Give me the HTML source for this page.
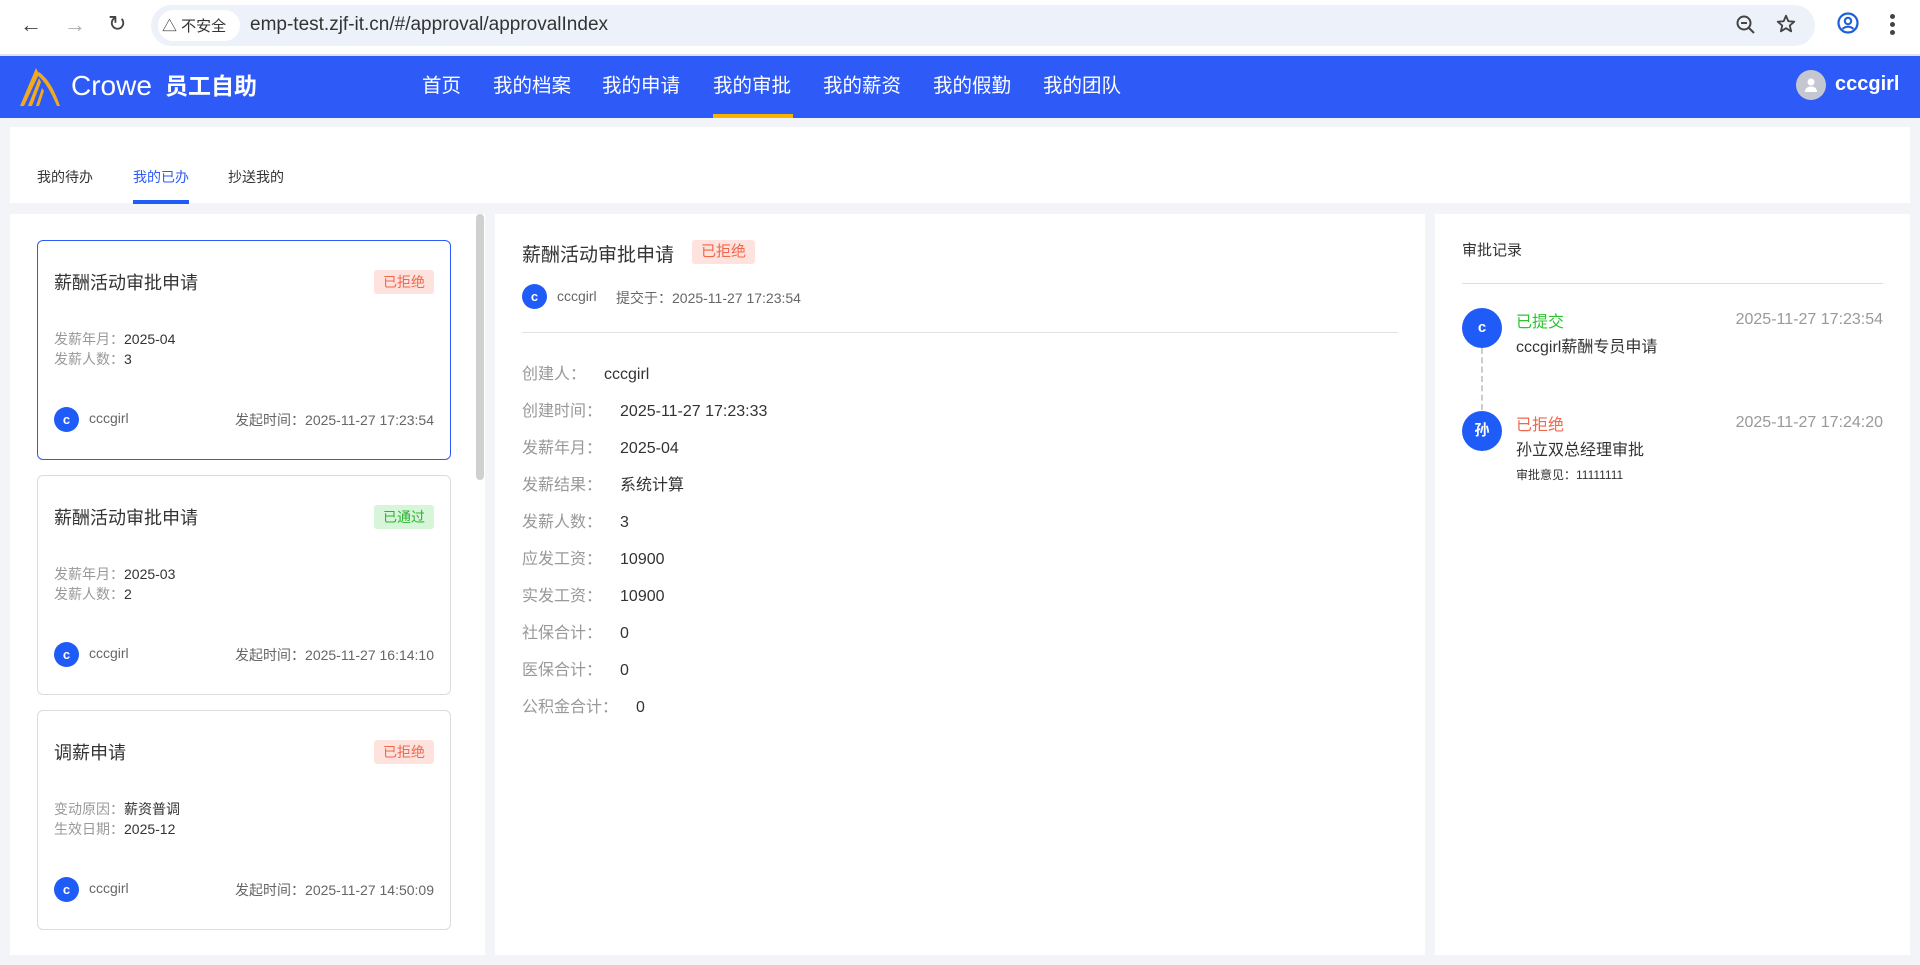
<!DOCTYPE html>
<html><head><meta charset="utf-8"><style>
*{margin:0;padding:0;box-sizing:border-box}
body{width:1920px;height:965px;overflow:hidden;background:#f3f4f8;font-family:"Liberation Sans","Noto Sans CJK SC",sans-serif;color:#333;position:relative}
.abs{position:absolute}
.chrome{left:0;top:0;width:1920px;height:54px;background:#fff}
.pill{left:151px;top:5px;width:1664px;height:41px;border-radius:21px;background:#edf2fa}
.nav{left:0;top:54px;width:1920px;height:64px;background:#2e5bf7;border-top:2px solid #dde3f0}
.navi{top:13px;color:#fff;font-size:19.5px;white-space:nowrap}
.panel{background:#fff}
.card{position:absolute;left:37px;width:414px;height:220px;border:1px solid #dcdcdc;border-radius:6px;background:#fff}
.card.sel{border-color:#2e5bf7}
.ct{position:absolute;left:16px;top:28px;font-size:18px;color:#333}
.tag{position:absolute;font-size:14px;padding:0 9px;height:24px;line-height:24px;border-radius:3px}
.rej{background:#fde2de;color:#f2674a}
.ok{background:#d7f5d9;color:#2bb42f}
.cd{position:absolute;left:16px;font-size:14px;color:#999}
.cd b{font-weight:normal;color:#333}
.av{position:absolute;border-radius:50%;background:#1f5cf7;color:#fff;text-align:center;font-weight:bold}
.foot{position:absolute;left:16px;top:169px;width:380px;font-size:14px;color:#666}
.row{position:absolute;left:522px;font-size:16px;color:#999;white-space:nowrap}
.row b{font-weight:normal;color:#333;margin-left:18px}
</style></head><body>
<div class="abs chrome"></div>
<div class="abs" style="left:20px;top:12px;font-size:22px;color:#444">&#8592;</div>
<div class="abs" style="left:64px;top:12px;font-size:22px;color:#aaa">&#8594;</div>
<div class="abs" style="left:108px;top:11px;font-size:22px;color:#444">&#8635;</div>
<div class="abs pill"></div>
<div class="abs" style="left:158px;top:10px;width:82px;height:31px;border-radius:16px;background:#fff"></div>
<div class="abs" style="left:162px;top:15px;font-size:15px;color:#333">&#9651; 不安全</div>
<div class="abs" style="left:250px;top:14px;font-size:19px;color:#333">emp-test.zjf-it.cn/#/approval/approvalIndex</div>
<svg class="abs" style="left:1735px;top:14px" width="22" height="22" viewBox="0 0 22 22"><circle cx="9" cy="9" r="6.5" fill="none" stroke="#444" stroke-width="2"/><path d="M6 9h6M14 14l5 5" stroke="#444" stroke-width="2"/></svg>
<svg class="abs" style="left:1775px;top:13px" width="22" height="22" viewBox="0 0 24 24"><path d="M12 3l2.6 6 6.4.5-4.9 4.2 1.5 6.3L12 16.6 6.4 20l1.5-6.3L3 9.5l6.4-.5z" fill="none" stroke="#444" stroke-width="2" stroke-linejoin="round"/></svg>
<svg class="abs" style="left:1836px;top:11px" width="24" height="24" viewBox="0 0 24 24"><circle cx="12" cy="12" r="9.5" fill="none" stroke="#1a5fd6" stroke-width="2.2"/><circle cx="12" cy="10" r="3.2" fill="none" stroke="#1a5fd6" stroke-width="2"/><path d="M6.5 18c3-3 8-3 11 0" fill="none" stroke="#1a5fd6" stroke-width="2"/></svg>
<div class="abs" style="left:1890px;top:14px;width:5px"><div style="width:5px;height:5px;border-radius:50%;background:#444;margin-bottom:3px"></div><div style="width:5px;height:5px;border-radius:50%;background:#444;margin-bottom:3px"></div><div style="width:5px;height:5px;border-radius:50%;background:#444"></div></div>

<div class="abs nav">
<svg class="abs" style="left:18px;top:10px" width="44" height="42" viewBox="0 0 44 42"><path d="M2 40L18 2l3 6L6 40z" fill="#f2a91b"/><path d="M10 40L21 12l2 4-9 24z" fill="#f2a91b"/><path d="M18 40l6-18 2 3-5 15z" fill="#f2a91b"/><path d="M21 6c8 6 15 16 21 34h-3C33 26 27 15 19 9z" fill="#f2a91b"/></svg>
<div class="abs" style="left:71px;top:14px;color:#fff;font-size:28px">Crowe</div>
<div class="abs" style="left:165px;top:11px;color:#fff;font-size:23px;font-weight:bold">员工自助</div>
<div class="abs navi" style="left:422px">首页</div>
<div class="abs navi" style="left:493px">我的档案</div>
<div class="abs navi" style="left:602px">我的申请</div>
<div class="abs navi" style="left:713px">我的审批</div>
<div class="abs navi" style="left:823px">我的薪资</div>
<div class="abs navi" style="left:933px">我的假勤</div>
<div class="abs navi" style="left:1043px">我的团队</div>
<div class="abs" style="left:713px;top:58px;width:80px;height:4px;background:#f7b500"></div>
<div class="abs" style="left:1796px;top:14px;width:30px;height:30px;border-radius:50%;background:#c4c7cf"></div>
<svg class="abs" style="left:1802px;top:20px" width="18" height="18" viewBox="0 0 18 18"><circle cx="9" cy="6" r="3.5" fill="#fff"/><path d="M3 16c0-4 3-5.5 6-5.5s6 1.5 6 5.5z" fill="#fff"/></svg>
<div class="abs" style="left:1835px;top:17px;color:#fff;font-size:20px;font-weight:bold">cccgirl</div>
</div>

<div class="abs panel" style="left:10px;top:127px;width:1900px;height:76px"></div>
<div class="abs" style="left:37px;top:167px;font-size:14px;color:#333">我的待办</div>
<div class="abs" style="left:133px;top:167px;font-size:14px;color:#2e5bf7">我的已办</div>
<div class="abs" style="left:228px;top:167px;font-size:14px;color:#333">抄送我的</div>
<div class="abs" style="left:133px;top:200px;width:56px;height:4px;background:#1f5cf7"></div>

<div class="abs panel" style="left:10px;top:214px;width:475px;height:741px;overflow:hidden">
 <div class="abs" style="left:466px;top:0;width:8px;height:266px;border-radius:4px;background:#d0d0d0"></div>
</div>
<div class="card sel" style="top:240px">
 <div class="ct">薪酬活动审批申请</div><div class="tag rej" style="right:16px;top:29px">已拒绝</div>
 <div class="cd" style="top:88px">发薪年月：<b>2025-04</b></div>
 <div class="cd" style="top:108px">发薪人数：<b>3</b></div>
 <div class="av" style="left:16px;top:166px;width:25px;height:25px;line-height:25px;font-size:13px">c</div>
 <div class="foot"><span style="margin-left:35px">cccgirl</span><span style="float:right">发起时间：2025-11-27 17:23:54</span></div>
</div>
<div class="card" style="top:475px">
 <div class="ct">薪酬活动审批申请</div><div class="tag ok" style="right:16px;top:29px">已通过</div>
 <div class="cd" style="top:88px">发薪年月：<b>2025-03</b></div>
 <div class="cd" style="top:108px">发薪人数：<b>2</b></div>
 <div class="av" style="left:16px;top:166px;width:25px;height:25px;line-height:25px;font-size:13px">c</div>
 <div class="foot"><span style="margin-left:35px">cccgirl</span><span style="float:right">发起时间：2025-11-27 16:14:10</span></div>
</div>
<div class="card" style="top:710px">
 <div class="ct">调薪申请</div><div class="tag rej" style="right:16px;top:29px">已拒绝</div>
 <div class="cd" style="top:88px">变动原因：<b>薪资普调</b></div>
 <div class="cd" style="top:108px">生效日期：<b>2025-12</b></div>
 <div class="av" style="left:16px;top:166px;width:25px;height:25px;line-height:25px;font-size:13px">c</div>
 <div class="foot"><span style="margin-left:35px">cccgirl</span><span style="float:right">发起时间：2025-11-27 14:50:09</span></div>
</div>

<div class="abs panel" style="left:495px;top:214px;width:930px;height:741px"></div>
<div class="abs" style="left:522px;top:240px;font-size:19px;color:#333">薪酬活动审批申请</div>
<div class="tag rej abs" style="left:692px;top:240px;font-size:15px">已拒绝</div>
<div class="av" style="left:522px;top:284px;width:25px;height:25px;line-height:25px;font-size:13px">c</div>
<div class="abs" style="left:557px;top:288px;font-size:14px;color:#666">cccgirl</div>
<div class="abs" style="left:616px;top:288px;font-size:14px;color:#666">提交于：2025-11-27 17:23:54</div>
<div class="abs" style="left:522px;top:332px;width:876px;height:1px;background:#e2e2e2"></div>
<div class="row" style="top:360px">创建人：<b>cccgirl</b></div>
<div class="row" style="top:397px">创建时间：<b>2025-11-27 17:23:33</b></div>
<div class="row" style="top:434px">发薪年月：<b>2025-04</b></div>
<div class="row" style="top:471px">发薪结果：<b>系统计算</b></div>
<div class="row" style="top:508px">发薪人数：<b>3</b></div>
<div class="row" style="top:545px">应发工资：<b>10900</b></div>
<div class="row" style="top:582px">实发工资：<b>10900</b></div>
<div class="row" style="top:619px">社保合计：<b>0</b></div>
<div class="row" style="top:656px">医保合计：<b>0</b></div>
<div class="row" style="top:693px">公积金合计：<b>0</b></div>

<div class="abs panel" style="left:1435px;top:214px;width:475px;height:741px"></div>
<div class="abs" style="left:1462px;top:239px;font-size:15px;color:#333">审批记录</div>
<div class="abs" style="left:1462px;top:283px;width:421px;height:1px;background:#ddd"></div>
<div class="abs" style="left:1481px;top:348px;height:62px;border-left:2px dashed #ccc"></div>
<div class="av" style="left:1462px;top:308px;width:40px;height:40px;line-height:40px;font-size:15px">c</div>
<div class="abs" style="left:1516px;top:308px;font-size:16px;color:#2bc42f">已提交</div>
<div class="abs" style="left:1516px;top:333px;font-size:16px;color:#333">cccgirl薪酬专员申请</div>
<div class="abs" style="right:37px;top:311px;font-size:16px;color:#999">2025-11-27 17:23:54</div>
<div class="av" style="left:1462px;top:411px;width:40px;height:40px;line-height:40px;font-size:15px">孙</div>
<div class="abs" style="left:1516px;top:411px;font-size:16px;color:#f2674a">已拒绝</div>
<div class="abs" style="left:1516px;top:436px;font-size:16px;color:#333">孙立双总经理审批</div>
<div class="abs" style="right:37px;top:414px;font-size:16px;color:#999">2025-11-27 17:24:20</div>
<div class="abs" style="left:1516px;top:466px;font-size:12px;color:#333">审批意见：11111111</div>
</body></html>
